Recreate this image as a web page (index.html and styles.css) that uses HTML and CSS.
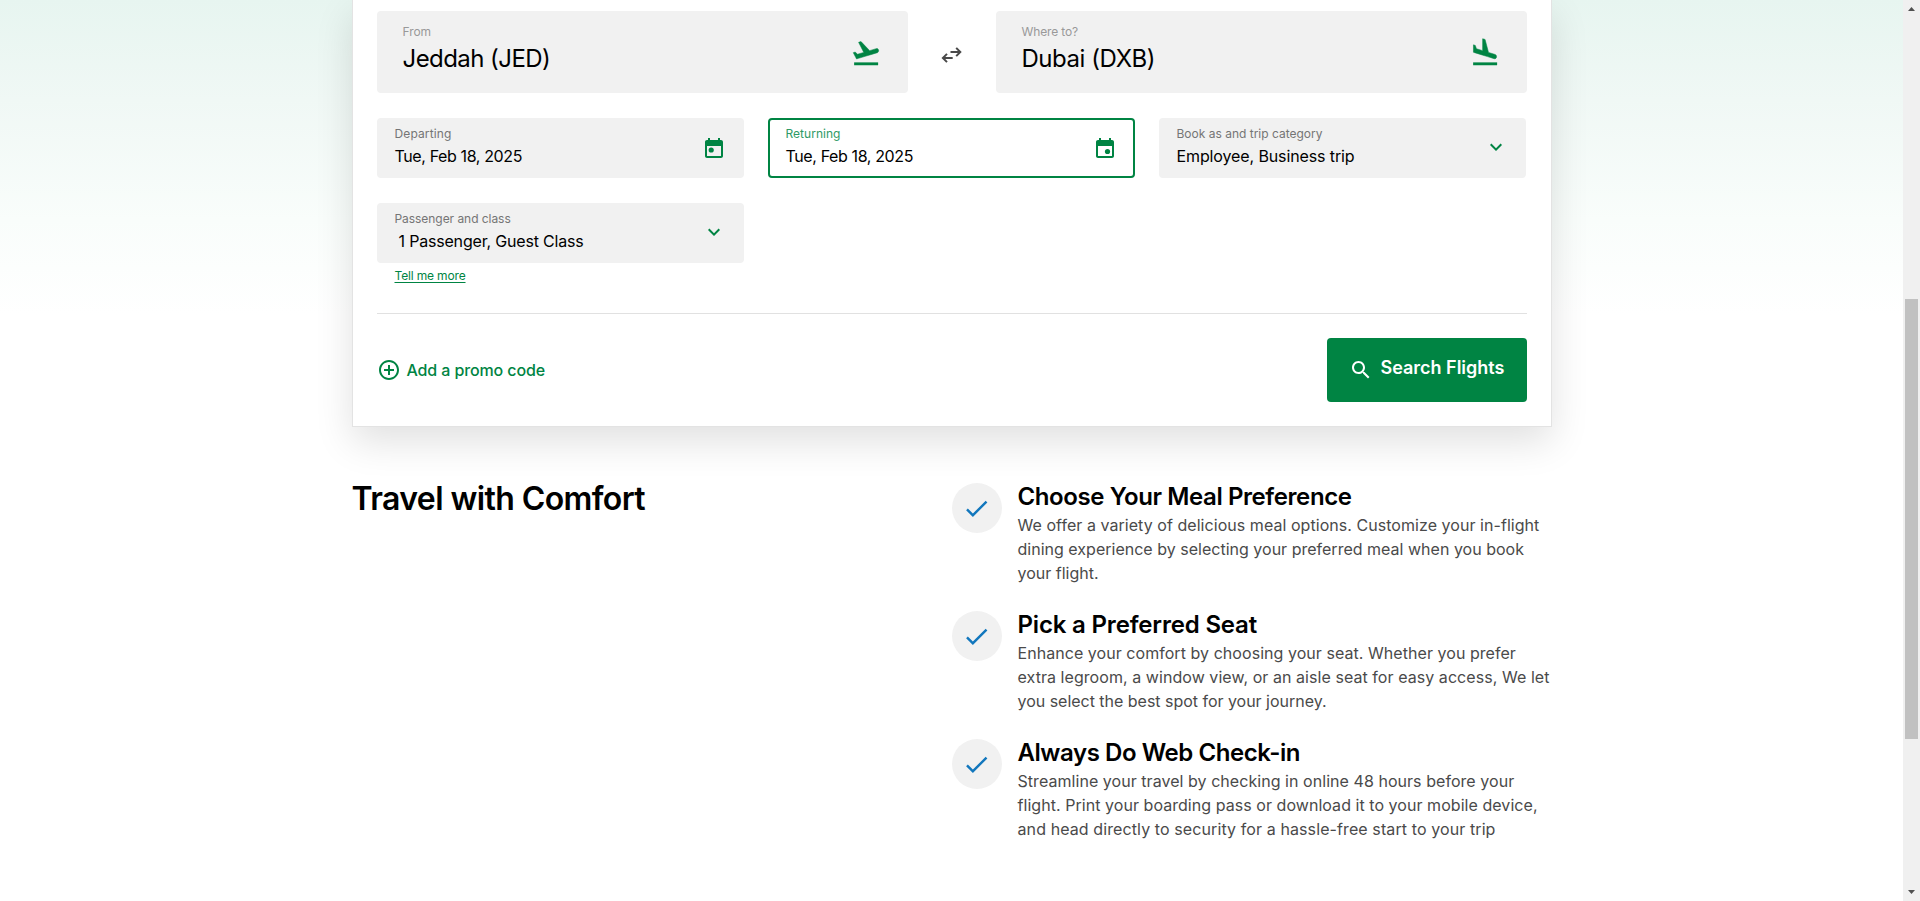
FILE: index.html
```html
<!DOCTYPE html>
<html lang="en">
<head>
<meta charset="utf-8">
<title>Search flights</title>
<link rel="stylesheet" href="styles.css">
</head>
<body>
<main class="page">
  <section class="card">
    <div class="route">
      <div class="place">
        <div class="place-text">
          <span class="label light t-from">From</span>
          <span class="city t-jed">Jeddah (JED)</span>
        </div>
        <svg class="plane" viewBox="0 0 24 24"><path d="M2.500 18.700h19.200v2.300H2.500z"/><path class="craft" transform="matrix(1 0 0 1.120 0 -1.900)" d="M22.070 9.640c-.21-.8-1.040-1.280-1.840-1.060L14.920 10l-6.900-6.430-1.930.51 4.140 7.170-4.970 1.330-1.970-1.540-1.450.39 1.820 3.160.77 1.330 1.600-.43 5.310-1.420 4.350-1.160L21 11.490c.81-.23 1.280-1.050 1.070-1.850z"/></svg>
      </div>
      <div class="swap">
        <svg viewBox="0 0 24 24"><path d="M10.500 9h9.800M16.200 4.900L20.300 9l-4.100 4.100M12.700 15H3.200M7 10.900L2.900 15 7 19.100"/></svg>
      </div>
      <div class="place">
        <div class="place-text">
          <span class="label light t-where">Where to?</span>
          <span class="city t-dxb">Dubai (DXB)</span>
        </div>
        <svg class="plane" viewBox="0 0 24 24"><path d="M2.500 18.700h19.200v2.300H2.500z"/><path class="craft" transform="matrix(1 0 0 1.150 0 -2.500)" d="M9.680 13.270l4.350 1.160 5.310 1.420c.8.210 1.620-.26 1.840-1.060.21-.8-.26-1.620-1.060-1.840l-5.310-1.420-2.760-9.020L10.120 2v8.280L5.150 8.950l-.93-2.320-1.450-.39v5.170l1.600.43 5.310 1.430z"/></svg>
      </div>
    </div>

    <div class="fields">
      <div class="field">
        <div class="field-text">
          <span class="label t-dep">Departing</span>
          <span class="value t-date">Tue, Feb 18, 2025</span>
        </div>
        <svg class="icon" viewBox="0 0 24 24"><path d="M19 3h-1V1h-2v2H8V1H6v2H5c-1.110 0-2 .9-2 2v14c0 1.100.890 2 2 2h14c1.100 0 2-.9 2-2V5c0-1.100-.9-2-2-2zm0 16H5V9h14z"/><circle cx="9.200" cy="13" r="2.600"/></svg>
      </div>
      <div class="field active">
        <div class="field-text">
          <span class="label t-ret">Returning</span>
          <span class="value t-date">Tue, Feb 18, 2025</span>
        </div>
        <svg class="icon" viewBox="0 0 24 24"><path d="M19 3h-1V1h-2v2H8V1H6v2H5c-1.110 0-2 .9-2 2v14c0 1.100.890 2 2 2h14c1.100 0 2-.9 2-2V5c0-1.100-.9-2-2-2zm0 16H5V9h14z"/><circle cx="14.500" cy="14.500" r="2.600"/></svg>
      </div>
      <div class="field raised">
        <div class="field-text">
          <span class="label">Book as and trip category</span>
          <span class="value t-emp">Employee, Business trip</span>
        </div>
        <svg class="icon" viewBox="0 0 24 24"><path d="M16.590 8.590L12 13.170 7.410 8.590 6 10l6 6 6-6z"/></svg>
      </div>
      <div class="field raised">
        <div class="field-text">
          <span class="label t-pax">Passenger and class</span>
          <span class="value t-guest">1 Passenger, Guest Class</span>
        </div>
        <svg class="icon" viewBox="0 0 24 24"><path d="M16.590 8.590L12 13.170 7.410 8.590 6 10l6 6 6-6z"/></svg>
      </div>
    </div>
    <a class="more">Tell me more</a>

    <div class="actions">
      <a class="promo">
        <svg viewBox="0 0 24 24"><path d="M13 7h-2v4H7v2h4v4h2v-4h4v-2h-4V7zm-1-5C6.480 2 2 6.480 2 12s4.480 10 10 10 10-4.480 10-10S17.520 2 12 2zm0 18c-4.410 0-8-3.590-8-8s3.590-8 8-8 8 3.590 8 8-3.590 8-8 8z"/></svg>
        <span>Add a promo code</span>
      </a>
      <button class="search">
        <svg viewBox="0 0 24 24"><path d="M15.500 14h-.790l-.280-.270C15.410 12.590 16 11.110 16 9.500 16 5.910 13.090 3 9.500 3S3 5.910 3 9.500 5.910 16 9.500 16c1.610 0 3.090-.590 4.230-1.570l.270.280v.790l5 4.990L20.490 19l-4.990-5zm-6 0C7.010 14 5 11.990 5 9.500S7.010 5 9.500 5 14 7.010 14 9.500 11.990 14 9.500 14z"/></svg>
        <span>Search Flights</span>
      </button>
    </div>
  </section>

  <section class="comfort">
    <h2>Travel with Comfort</h2>
    <div class="features">
      <article class="feature">
        <div class="tick"><svg viewBox="0 0 24 24"><path d="M9 16.170L4.830 12l-1.420 1.410L9 19 21 7l-1.410-1.410z"/></svg></div>
        <div>
          <h3 class="t-meal">Choose Your Meal Preference</h3>
          <p><span class="l1">We offer a variety of delicious meal options. Customize your in-flight</span><br><span class="l2">dining experience by selecting your preferred meal when you book</span><br>your flight.</p>
        </div>
      </article>
      <article class="feature">
        <div class="tick"><svg viewBox="0 0 24 24"><path d="M9 16.170L4.830 12l-1.420 1.410L9 19 21 7l-1.410-1.410z"/></svg></div>
        <div>
          <h3 class="t-seat">Pick a Preferred Seat</h3>
          <p><span class="l1">Enhance your comfort by choosing your seat. Whether you prefer</span><br><span class="l3">extra legroom, a window view, or an aisle seat for easy access, We let</span><br><span class="l4">you select the best spot for your journey.</span></p>
        </div>
      </article>
      <article class="feature">
        <div class="tick"><svg viewBox="0 0 24 24"><path d="M9 16.170L4.830 12l-1.420 1.410L9 19 21 7l-1.410-1.410z"/></svg></div>
        <div>
          <h3 class="t-web">Always Do Web Check-in</h3>
          <p><span class="l1">Streamline your travel by checking in online 48 hours before your</span><br><span class="l1">flight. Print your boarding pass or download it to your mobile device,</span><br><span class="l5">and head directly to security for a hassle-free start to your trip</span></p>
        </div>
      </article>
    </div>
  </section>
</main>
<aside class="scrollbar">
  <svg class="arrow" viewBox="0 0 7 4"><path d="M0 4L3.500 0 7 4z"/></svg>
  <div class="thumb"></div>
  <svg class="arrow" viewBox="0 0 7 4"><path d="M0 0L3.500 4 7 0z"/></svg>
</aside>
</body>
</html>
```
FILE: styles.css
```css
* { box-sizing: border-box; }
body {
  margin: 0;
  height: 901px;
  overflow: hidden;
  display: flex;
  background: #fff;
  font-family: Inter, "Liberation Sans", sans-serif;
  color: #000;
}
svg { display: block; flex: none; fill: #008443; }

.page {
  flex: 1;
  display: flex;
  flex-direction: column;
  align-items: center;
  background: linear-gradient(#e7f5f0 0, #f0f8f5 100px, #f9fdfb 220px, #fff 315px);
}

.card {
  width: 1200px;
  height: 427px;
  flex: none;
  padding: 11px 24px 0;
  background: #fff;
  border: 1px solid #e3e3e3;
  border-top: 0;
  box-shadow: 0 15px 36px rgba(0, 0, 0, .12);
}

.route { display: flex; justify-content: space-between; height: 82px; }
.place {
  width: 531px;
  display: flex;
  justify-content: space-between;
  background: #f1f1f1;
  border-radius: 4px;
  padding: 0 27px 0 26px;
}
.place-text { display: flex; flex-direction: column; padding-top: 13px; }
.plane { width: 30px; height: 30px; margin-top: 28px; overflow: visible; }
.craft { stroke: #008443; stroke-width: .4; stroke-linejoin: round; }
.swap { display: flex; align-items: center; padding-top: 6px; }
.swap svg { width: 24px; height: 24px; fill: none; stroke: #4a4a4a; stroke-width: 2; }

.label { font-size: 12px; line-height: 16px; color: #757575; }
.light { color: #999; }
.city { font-size: 24px; line-height: 36px; margin-top: 1px; }

.fields {
  display: grid;
  grid-template-columns: repeat(3, 367px);
  gap: 25px 24px;
  margin-top: 25px;
}
.field {
  height: 60px;
  display: flex;
  justify-content: space-between;
  padding: 0 18px;
  background: #f1f1f1;
  border-radius: 4px;
}
.field-text { display: flex; flex-direction: column; padding-top: 8px; }
.value { font-size: 16px; line-height: 24px; margin-top: 2px; }
.icon { width: 24px; height: 24px; margin-top: 19px; }
.raised .icon { margin-top: 17px; }
.active { background: #fff; border: 2px solid #008443; padding: 0 16px; }
.active .field-text { padding-top: 6px; }
.active .icon { margin-top: 17px; }
.active .label { color: #2f9a65; }

.more {
  display: block;
  width: max-content;
  margin: 5px 0 0 18px;
  font-size: 12px;
  line-height: 16px;
  letter-spacing: -.158px;
  color: #008443;
  text-decoration: underline;
  text-underline-offset: 2px;
}

.actions {
  display: flex;
  justify-content: space-between;
  margin-top: 29px;
  padding-top: 24px;
  border-top: 1px solid #e1e1e1;
}
.promo {
  display: flex;
  height: 64px;
  align-items: center;
  gap: 6px;
  font-size: 16px;
  font-weight: 500;
  letter-spacing: -.118px;
  color: #008443;
}
.promo svg { width: 24px; height: 24px; }
.search {
  display: flex;
  width: 200px;
  height: 64px;
  padding: 0 0 0 22px;
  gap: 8px;
  border: 0;
  border-radius: 4px;
  background: #008443;
  color: #fff;
  font: 600 18px/24px Inter, sans-serif;
  letter-spacing: -.01px;
}
.search svg { width: 24px; height: 24px; margin-top: 20px; fill: #fff; }
.search span { margin-top: 18px; }

.comfort {
  width: 1200px;
  display: grid;
  grid-template-columns: 1fr 1fr;
  padding-top: 56px;
}
h2, h3, p { margin: 0; }
h2 { font-size: 32px; line-height: 32px; font-weight: 600; letter-spacing: -.6px; }
.features { display: flex; flex-direction: column; gap: 24px; }
.feature { display: flex; gap: 16px; height: 104px; }
.tick {
  width: 50px;
  height: 50px;
  flex: none;
  display: flex;
  align-items: center;
  justify-content: center;
  background: #f1f1f1;
  border-radius: 50%;
}
.tick svg { width: 29px; height: 29px; fill: #1277bd; }
h3 { font-size: 24px; line-height: 28px; font-weight: 600; white-space: nowrap; }
p { font-size: 16px; line-height: 24px; color: #4a4a4a; white-space: nowrap; margin-top: 2px; }

.scrollbar {
  width: 17px;
  display: flex;
  flex-direction: column;
  align-items: center;
  padding: 7px 0;
  background: #f0f0f0;
}
.thumb { width: 13px; height: 440px; margin: 288px 0 auto; background: #c1c1c1; }
.arrow { width: 7px; height: 4px; fill: #505050; }

/* Tracking for individual labels */
.t-from { letter-spacing: -.064px; }
.t-jed { letter-spacing: -.56px; }
.t-where { letter-spacing: -.138px; }
.t-dxb { letter-spacing: -.45px; }
.t-dep { letter-spacing: .128px; }
.t-ret { letter-spacing: .032px; }
.t-date { letter-spacing: -.38px; }
.t-emp { letter-spacing: -.114px; }
.t-pax { letter-spacing: -.05px; }
.t-guest { letter-spacing: -.188px; padding-left: 4px; }
.t-meal { letter-spacing: -.407px; }
.t-seat { letter-spacing: -.174px; }
.t-web { letter-spacing: -.437px; }
.l1 { letter-spacing: .049px; }
.l2 { letter-spacing: .012px; }
.l3 { letter-spacing: .059px; }
.l4 { letter-spacing: -.021px; }
.l5 { letter-spacing: .1px; }
```
